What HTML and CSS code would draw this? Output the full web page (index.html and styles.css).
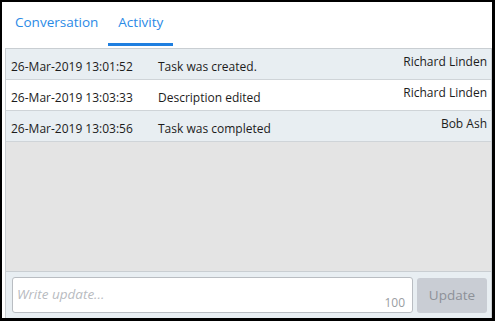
FILE: index.html
```html
<!DOCTYPE html>
<html lang="en">
  <head>
    <meta charset="UTF-8" />
    <meta name="viewport" content="width=device-width, initial-scale=1.0" />
    <title>Task activity</title>
    <link rel="stylesheet" href="styles.css">
  </head>
  <body>
    <div class="app">
      <!-- Tabs -->
      <div class="tabs">
        <span class="tab">Conversation</span>
        <span class="tab active">Activity</span>
      </div>
      <div class="panel">
        <div class="log">
          <div class="row">
            <span class="date">26-Mar-2019 13:01:52</span>
            <span class="desc">Task was created.</span>
            <span class="user">Richard Linden</span>
          </div>
          <div class="row">
            <span class="date">26-Mar-2019 13:03:33</span>
            <span class="desc">Description edited</span>
            <span class="user">Richard Linden</span>
          </div>
          <div class="row">
            <span class="date">26-Mar-2019 13:03:56</span>
            <span class="desc">Task was completed</span>
            <span class="user">Bob Ash</span>
          </div>
        </div>
        <!-- Write an update -->
        <div class="composer">
          <div class="input">
            <span class="placeholder">Write update...</span>
            <span class="count">100</span>
          </div>
          <button class="update" disabled>Update</button>
        </div>
      </div>
    </div>
  </body>
</html>
```

FILE: styles.css
```css
html,
body {
  margin: 0;
  height: 100%;
}

body {
  background-color: #000;
  padding: 2px 3px 3px 2px;
  box-sizing: border-box;
  font-family: "Open Sans", sans-serif;
}

.app {
  background-color: #fff;
  height: 100%;
  display: flex;
  flex-direction: column;
}

.tabs {
  display: flex;
  height: 46px;
  padding-left: 3px;
}

.tab {
  font-size: 13.5px;
  color: #2b8ae6;
  padding: 0 10px;
  line-height: 40px;
  border-bottom: 3px solid transparent;
  height: 41px;
}

.tab.active {
  border-bottom-color: #1f7fe0;
}

.panel {
  flex: 1;
  margin-left: 3px;
  border: 1px solid #c9ced2;
  border-bottom: none;
  background-color: #e4e4e4;
  display: flex;
  flex-direction: column;
}

.log {
  flex: 1;
}

.row {
  display: flex;
  align-items: flex-start;
  height: 30px;
  border-bottom: 1px solid #cfd4d8;
  background-color: #e8eef2;
  font-size: 12px;
  color: #1c1c1c;
}

.row:nth-child(even) {
  background-color: #fff;
}

.date {
  width: 147px;
  padding-left: 5px;
  padding-top: 9px;
}

.desc {
  flex: 1;
  padding-top: 9px;
}

.user {
  padding-right: 4px;
  padding-top: 4px;
}

.composer {
  height: 46px;
  border-top: 1px solid #c9ced2;
  background-color: #e8eef2;
  display: flex;
  align-items: center;
  gap: 4px;
  padding: 0 4px 0 6px;
}

.input {
  flex: 1;
  height: 34px;
  background-color: #fff;
  border: 1px solid #b9bdc2;
  border-radius: 3px;
  position: relative;
}

.placeholder {
  position: absolute;
  left: 4px;
  top: 7px;
  font-size: 13.5px;
  font-style: italic;
  color: #b8bbbf;
}

.count {
  position: absolute;
  right: 7px;
  bottom: 1px;
  font-size: 12px;
  color: #999da2;
}

.update {
  width: 70px;
  height: 35px;
  border: none;
  border-radius: 3px;
  background-color: #c9cdd4;
  color: #8d9198;
  font-family: "Open Sans", sans-serif;
  font-size: 13.5px;
}
```
